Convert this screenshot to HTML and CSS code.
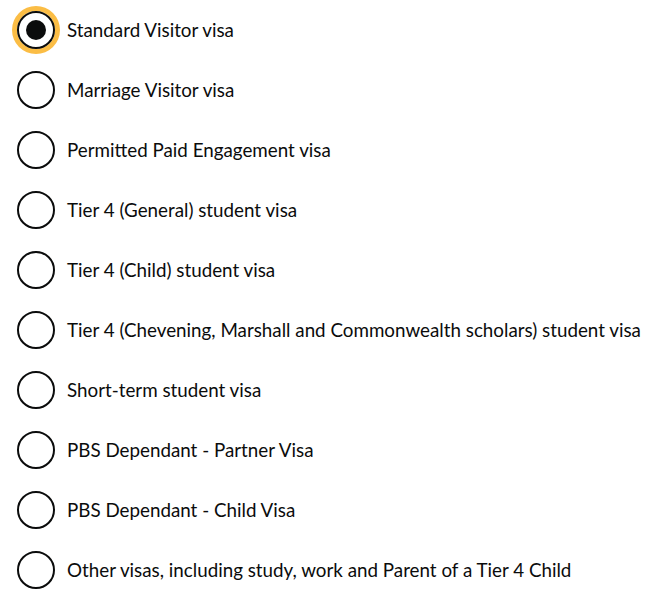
FILE: index.html
```html
<!DOCTYPE html>
<html>
<head>
<meta charset="utf-8">
<link rel="stylesheet" href="styles.css">
</head>
<body>
<div class="radios">
  <label class="radio"><span class="control checked focused"><span class="dot"></span></span><span class="label">Standard Visitor visa</span></label>
  <label class="radio"><span class="control"></span><span class="label">Marriage Visitor visa</span></label>
  <label class="radio"><span class="control"></span><span class="label">Permitted Paid Engagement visa</span></label>
  <label class="radio"><span class="control"></span><span class="label">Tier 4 (General) student visa</span></label>
  <label class="radio"><span class="control"></span><span class="label">Tier 4 (Child) student visa</span></label>
  <label class="radio"><span class="control"></span><span class="label">Tier 4 (Chevening, Marshall and Commonwealth scholars) student visa</span></label>
  <label class="radio"><span class="control"></span><span class="label">Short-term student visa</span></label>
  <label class="radio"><span class="control"></span><span class="label">PBS Dependant - Partner Visa</span></label>
  <label class="radio"><span class="control"></span><span class="label">PBS Dependant - Child Visa</span></label>
  <label class="radio"><span class="control"></span><span class="label">Other visas, including study, work and Parent of a Tier 4 Child</span></label>
</div>
</body>
</html>
```
FILE: styles.css
```css
html, body {
  margin: 0;
  padding: 0;
  background: #ffffff;
}
.radios {
  display: flex;
  flex-direction: column;
  padding-top: 0;
}
.radio {
  display: flex;
  align-items: center;
  height: 60px;
  font-family: Lato, "Noto Sans", sans-serif;
  font-size: 18.8px;
  color: #0b0c0c;
}
.control {
  box-sizing: border-box;
  width: 38px;
  height: 38px;
  margin-left: 17px;
  margin-right: 12px;
  margin-top: -1px;
  border: 2px solid #0b0c0c;
  border-radius: 50%;
  display: flex;
  align-items: center;
  justify-content: center;
  flex-shrink: 0;
}
.control.focused {
  box-shadow: 0 0 0 5px #fbbd45;
}
.dot {
  width: 20px;
  height: 20px;
  border-radius: 50%;
  background: #0b0c0c;
}
.label {
  line-height: 24px;
}
```
